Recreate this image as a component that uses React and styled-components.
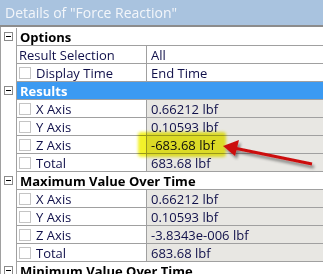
import styled, { createGlobalStyle } from "styled-components";

const GlobalStyle = createGlobalStyle`
  html, body {
    margin: 0;
    padding: 0;
    background: #ffffff;
    overflow: hidden;
  }
  body {
    font-family: "Open Sans", "Noto Sans", sans-serif;
  }
`;

const sections = [
  {
    title: "Options",
    rows: [
      { name: "Result Selection", value: "All" },
      { name: "Display Time", value: "End Time", check: true },
    ],
  },
  {
    title: "Results",
    active: true,
    readOnly: true,
    rows: [
      { name: "X Axis", value: "0.66212 lbf", check: true },
      { name: "Y Axis", value: "0.10593 lbf", check: true },
      { name: "Z Axis", value: "-683.68 lbf", check: true },
      { name: "Total", value: "683.68 lbf", check: true },
    ],
  },
  {
    title: "Maximum Value Over Time",
    readOnly: true,
    rows: [
      { name: "X Axis", value: "0.66212 lbf", check: true },
      { name: "Y Axis", value: "0.10593 lbf", check: true },
      { name: "Z Axis", value: "-3.8343e-006 lbf", check: true },
      { name: "Total", value: "683.68 lbf", check: true },
    ],
  },
  {
    title: "Minimum Value Over Time",
    readOnly: true,
    rows: [],
  },
];

export default function App() {
  return (
    <>
      <GlobalStyle />
      <Panel>
        <TitleBar>Details of "Force Reaction"</TitleBar>
        <Grid>
          {sections.map((s) => (
            <div key={s.title}>
              <Row>
                <Gutter>
                  <Toggle />
                </Gutter>
                <Header $active={s.active}>{s.title}</Header>
              </Row>
              {s.rows.map((r) => (
                <Row key={s.title + r.name}>
                  <Gutter />
                  <Name>
                    {r.check ? <Check /> : null}
                    {r.name}
                  </Name>
                  <Value $readOnly={s.readOnly}>{r.value}</Value>
                </Row>
              ))}
            </div>
          ))}
        </Grid>
        <Highlight />
        <Arrow width="323" height="274" viewBox="0 0 323 274">
          <defs>
            <filter id="shadow" x="-20%" y="-60%" width="140%" height="220%">
              <feGaussianBlur in="SourceAlpha" stdDeviation="1.8" />
              <feOffset dx="2" dy="3" />
              <feComponentTransfer>
                <feFuncA type="linear" slope="0.45" />
              </feComponentTransfer>
              <feMerge>
                <feMergeNode />
                <feMergeNode in="SourceGraphic" />
              </feMerge>
            </filter>
          </defs>
          <g filter="url(#shadow)">
            <line x1="312" y1="164" x2="234" y2="148" stroke="#cc0f10" strokeWidth="3" />
            <polygon points="223,146 239,140 235,156" fill="#cc0f10" />
          </g>
        </Arrow>
      </Panel>
    </>
  );
}

const Panel = styled.div`
  position: relative;
  width: 323px;
  height: 274px;
  overflow: hidden;
  background: #ffffff;
  font-size: 13px;
`;

const TitleBar = styled.div`
  height: 25px;
  padding-left: 5px;
  display: flex;
  align-items: center;
  background: #a9c3df;
  border-bottom: 2px solid #8c8c8c;
  color: #f3f6fa;
  font-size: 14px;
  white-space: nowrap;
`;

const Grid = styled.div`
  padding-top: 1px;
  border-left: 1px solid #a0a0a0;
`;

const Row = styled.div`
  display: flex;
  height: 18px;
`;

const Gutter = styled.div`
  width: 16px;
  flex: none;
  border-right: 1px solid #a0a0a0;
  display: flex;
  justify-content: center;
  padding-top: 4px;
  box-sizing: border-box;
`;

const Toggle = styled.div`
  position: relative;
  width: 9px;
  height: 9px;
  box-sizing: border-box;
  border: 1px solid #8a8a8a;
  background: #fff;

  &::after {
    content: "";
    position: absolute;
    left: 1px;
    right: 1px;
    top: 3px;
    height: 1px;
    background: #000;
  }
`;

const Header = styled.div`
  flex: 1;
  display: flex;
  align-items: center;
  padding-left: 3px;
  font-weight: 700;
  font-size: 13px;
  white-space: nowrap;
  border-bottom: 1px solid #a0a0a0;
  background: ${(p) => (p.$active ? "#3b9af2" : "#ffffff")};
  color: ${(p) => (p.$active ? "#ffffff" : "#000000")};
`;

const Name = styled.div`
  width: 130px;
  flex: none;
  display: flex;
  align-items: center;
  gap: 5px;
  padding-left: 2px;
  box-sizing: border-box;
  border-right: 1px solid #a0a0a0;
  border-bottom: 1px solid #a0a0a0;
  color: #10104a;
  white-space: nowrap;
`;

const Check = styled.span`
  width: 12px;
  height: 12px;
  box-sizing: border-box;
  border: 1px solid #c4c4c4;
  background: #fff;
  flex: none;
`;

const Value = styled.div`
  flex: 1;
  display: flex;
  align-items: center;
  padding-left: 4px;
  border-bottom: 1px solid #a0a0a0;
  background: ${(p) => (p.$readOnly ? "#e8e7e3" : "#ffffff")};
  color: #10104a;
  white-space: nowrap;
`;

const Highlight = styled.div`
  position: absolute;
  left: 138px;
  top: 132px;
  width: 88px;
  height: 25px;
  background: #f2f22a;
  border-radius: 3px;
  filter: blur(1.5px);
  mix-blend-mode: multiply;
`;

const Arrow = styled.svg`
  position: absolute;
  left: 0;
  top: 0;
  pointer-events: none;
`;
